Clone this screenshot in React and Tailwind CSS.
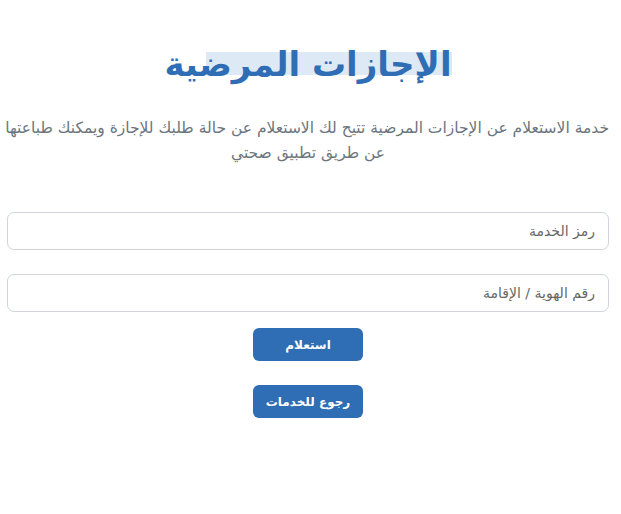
import React from 'react';

export default function App() {
  return (
    <div dir="rtl" className="min-h-screen bg-white pl-[7px] pr-[12px] pt-[38px] text-center" style={{ fontFamily: '"DejaVu Sans", "Noto Sans", sans-serif' }}>
      <h1 className="text-[34px] font-bold leading-[52px] text-[#2f6db5]">
        <span className="relative inline-block">
          <span className="absolute left-[42px] right-0 top-[14px] h-[23px] bg-[#dde9f5]" />
          <span className="relative">الإجازات المرضية</span>
        </span>
      </h1>
      <p className="mt-[26px] text-[15.5px] leading-[25px] text-[#6c757d] whitespace-nowrap">
        خدمة الاستعلام عن الإجازات المرضية تتيح لك الاستعلام عن حالة طلبك للإجازة ويمكنك طباعتها
        <br />
        عن طريق تطبيق صحتي
      </p>
      <div className="mt-[46px] flex flex-col gap-[24px]">
        <input
          placeholder="رمز الخدمة"
          className="h-[38px] w-full rounded-[7px] border border-[#d1d5db] px-[13px] text-[14px] placeholder:text-[#666666] outline-none"
        />
        <input
          placeholder="رقم الهوية / الإقامة"
          className="h-[38px] w-full rounded-[7px] border border-[#d1d5db] px-[13px] text-[14px] placeholder:text-[#666666] outline-none"
        />
      </div>
      <div className="mt-[16px] flex flex-col items-center gap-[24px]">
        <button className="h-[33px] w-[110px] rounded-[6px] bg-[#2f6db5] text-[12px] font-bold text-white">استعلام</button>
        <button className="h-[33px] w-[110px] rounded-[6px] bg-[#2f6db5] text-[12px] font-bold text-white">رجوع للخدمات</button>
      </div>
    </div>
  );
}
